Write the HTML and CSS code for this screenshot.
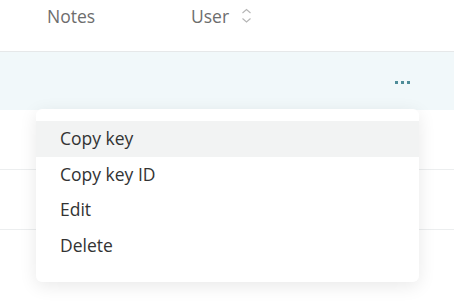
FILE: index.html
```html
<!DOCTYPE html>
<html lang="en">
<head>
    <meta charset="UTF-8">
    <meta name="viewport" content="width=device-width, initial-scale=1.0">
    <title>Keys</title>
    <link rel="stylesheet" href="styles.css">
</head>
<body>
    <div class="table">
        <!-- Cabecera de la tabla -->
        <div class="table-head">
            <div class="col-notes">Notes</div>
            <div class="col-user">
                User
                <svg class="sort-icon" width="11" height="16" viewBox="0 0 11 16">
                    <path d="M1.5 5 L5.5 1.5 L9.5 5" fill="none" stroke="#b5b5b5" stroke-width="1.1"/>
                    <path d="M1.5 10.5 L5.5 14 L9.5 10.5" fill="none" stroke="#b5b5b5" stroke-width="1.1"/>
                </svg>
            </div>
        </div>

        <div class="table-row active">
            <span class="row-actions"><i></i><i></i><i></i></span>
        </div>
        <div class="table-row"></div>
        <div class="table-row"></div>

        <!-- Menú contextual -->
        <ul class="menu">
            <li class="hover">Copy key</li>
            <li>Copy key ID</li>
            <li>Edit</li>
            <li>Delete</li>
        </ul>
    </div>
</body>
</html>
```

FILE: styles.css
```css
body {
    margin: 0;
    font-family: "Open Sans", Arial, sans-serif;
    background: #ffffff;
    height: 302px;
    overflow: hidden;
}
.table {
    position: relative;
}
.table-head {
    display: flex;
    align-items: center;
    height: 52px;
    border-bottom: 1px solid #e6e8e9;
    font-size: 17.5px;
    color: #6d6d6d;
    padding-bottom: 20px;
    box-sizing: border-box;
}
.col-notes {
    margin-left: 47px;
    width: 144px;
}
.col-user {
    display: flex;
    align-items: center;
}
.sort-icon {
    margin-left: 12px;
}
.table-row {
    height: 59px;
    border-bottom: 1px solid #eceeef;
    display: flex;
    align-items: center;
    justify-content: flex-end;
}
.table-row.active {
    background-color: #f1f8fa;
    height: 58px;
    border-bottom: none;
}
.row-actions {
    display: flex;
    gap: 3px;
    margin-right: 44px;
    margin-top: 3px;
}
.row-actions i {
    display: block;
    width: 3px;
    height: 3px;
    background-color: #4f8d99;
}
.menu {
    position: absolute;
    top: 109px;
    left: 36px;
    width: 383px;
    margin: 0;
    padding: 12px 0 19px;
    list-style: none;
    background: #ffffff;
    border-radius: 6px;
    box-shadow: 0 4px 18px rgba(0, 0, 0, 0.09);
    font-size: 17.5px;
    color: #333333;
}
.menu li {
    height: 35.5px;
    line-height: 35.5px;
    padding-left: 24px;
}
.menu li.hover {
    background-color: #f2f3f3;
}
```
